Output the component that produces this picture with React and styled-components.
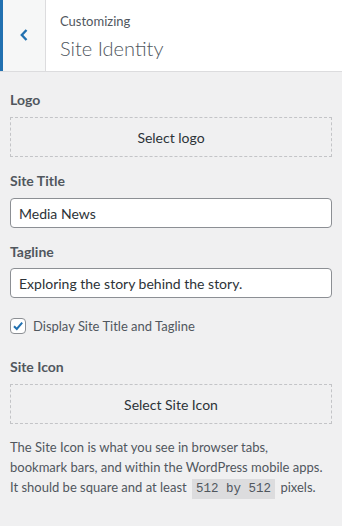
import React from "react";
import styled, { createGlobalStyle } from "styled-components";

const Global = createGlobalStyle`
  html, body { margin: 0; padding: 0; background: #f0f0f1; }
  body { font-family: "Lato", "Open Sans", sans-serif; color: #3c434a; }
  * { box-sizing: border-box; }
`;

const Panel = styled.div`
  width: 342px;
  min-height: 526px;
  background: #f0f0f1;
`;

const Header = styled.div`
  display: flex;
  height: 72px;
  background: #fff;
  border-bottom: 1px solid #dcdcde;
`;

const BackButton = styled.button`
  width: 46px;
  flex: none;
  border: none;
  border-left: 3px solid #2271b1;
  border-right: 1px solid #dcdcde;
  background: #f6f7f7;
  display: flex;
  align-items: center;
  justify-content: center;
  padding: 0 0 2px 0;
  color: #2271b1;
`;

const Titles = styled.div`
  display: flex;
  flex-direction: column;
  padding: 12px 0 0 14px;
`;

const Small = styled.span`
  font-size: 13px;
  line-height: 18px;
  color: #50575e;
`;

const Big = styled.span`
  font-size: 20px;
  line-height: 28px;
  font-weight: 300;
  color: #50575e;
  margin-top: 4px;
`;

const Body = styled.div`
  display: flex;
  flex-direction: column;
  padding: 18px 10px 0 10px;
`;

const Label = styled.div`
  font-size: 14px;
  line-height: 20px;
  font-weight: 700;
  color: #50575e;
  margin-bottom: ${(p) => p.$mb ?? 7}px;
`;

const DashedButton = styled.button`
  width: 100%;
  height: 40px;
  border: 1px dashed #c3c4c7;
  background: transparent;
  font-family: inherit;
  font-size: 14px;
  color: #2c3338;
  padding: 0;
  margin-bottom: ${(p) => p.$mb || 0}px;
`;

const Input = styled.input`
  display: block;
  width: 100%;
  height: 30px;
  border: 1px solid #8c8f94;
  border-radius: 4px;
  background: #fff;
  padding: 0 8px;
  font-family: inherit;
  font-size: 14px;
  color: #2c3338;
  margin: 0 0 ${(p) => p.$mb || 0}px 0;
`;

const Gap = styled.div`
  height: ${(p) => p.$h}px;
`;

const CheckRow = styled.label`
  display: flex;
  align-items: center;
  gap: 7px;
  height: 16px;
  font-size: 13px;
  color: #50575e;
`;

const Box = styled.span`
  width: 16px;
  height: 16px;
  border: 1px solid #8c8f94;
  border-radius: 4px;
  background: #fff;
  display: flex;
  align-items: center;
  justify-content: center;
`;

const Desc = styled.p`
  margin: 13px 0 0 0;
  padding-right: 4px;
  font-size: 13px;
  line-height: 20px;
  color: #50575e;
`;

const Code = styled.code`
  font-family: "Liberation Mono", monospace;
  font-size: 12.5px;
  background: #dcdcde;
  padding: 3px 4px;
  margin: 0 2px;
`;

export default function App() {
  return (
    <>
      <Global />
      <Panel>
        <Header>
          <BackButton aria-label="Back">
            <svg width="10" height="14" viewBox="0 0 10 14">
              <path d="M7.5 2 L2.8 7 L7.5 12" fill="none" stroke="#2271b1" strokeWidth="2.4" />
            </svg>
          </BackButton>
          <Titles>
            <Small>Customizing</Small>
            <Big>Site Identity</Big>
          </Titles>
        </Header>
        <Body>
          <Label>Logo</Label>
          <DashedButton $mb={14}>Select logo</DashedButton>
          <Label>Site Title</Label>
          <Input defaultValue="Media News" $mb={14} />
          <Label $mb={6}>Tagline</Label>
          <Input defaultValue="Exploring the story behind the story." />
          <Gap $h={20} />
          <CheckRow>
            <Box>
              <svg width="14" height="14" viewBox="0 0 14 14">
                <path d="M3 7.2 L5.8 10 L11.2 3.6" fill="none" stroke="#2271b1" strokeWidth="2" />
              </svg>
            </Box>
            Display Site Title and Tagline
          </CheckRow>
          <Gap $h={23} />
          <Label>Site Icon</Label>
          <DashedButton>Select Site Icon</DashedButton>
          <Desc>
            The Site Icon is what you see in browser tabs, bookmark bars, and within the WordPress mobile apps. It should be square and at least <Code>512 by 512</Code> pixels.
          </Desc>
        </Body>
      </Panel>
    </>
  );
}
